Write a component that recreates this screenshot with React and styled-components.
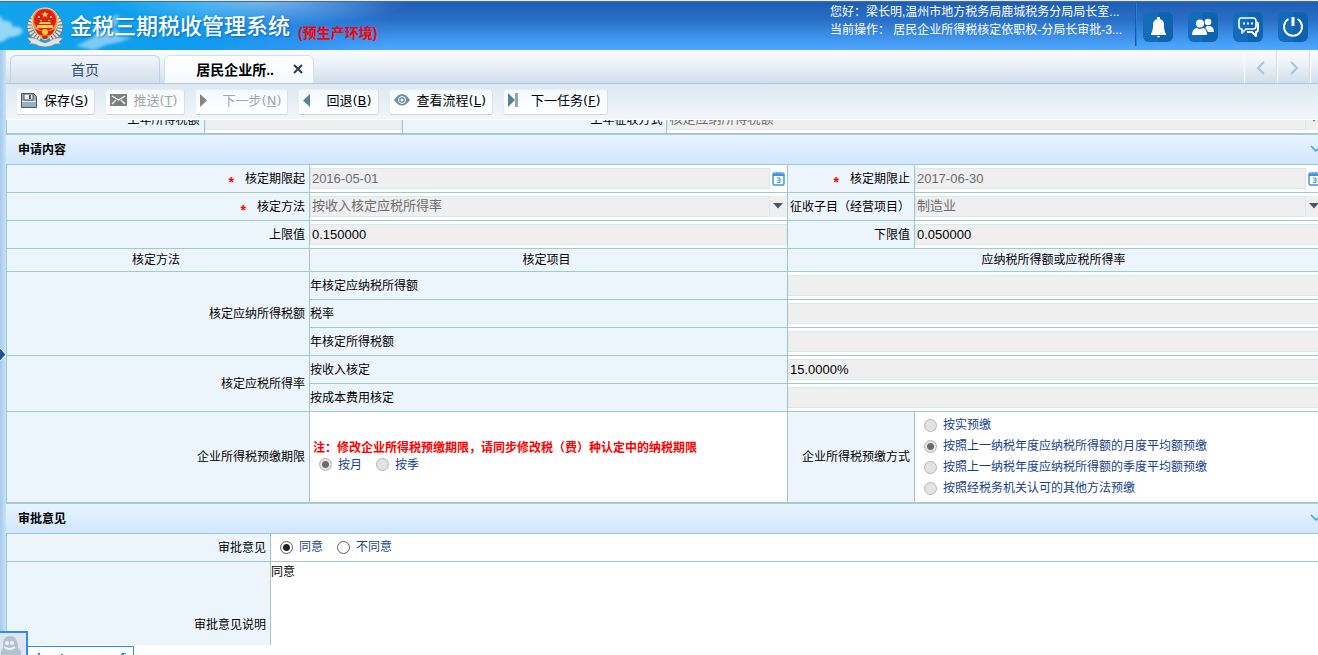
import { useLayoutEffect, useRef } from 'react';
import styled, { createGlobalStyle, css } from 'styled-components';

const GlobalStyle = createGlobalStyle`
	*, *::before, *::after {
		box-sizing: border-box;
	}

	body {
		margin: 0;
		background: #fff;
		color: #000;
		font: 12px/16px 'Liberation Sans', 'Noto Sans CJK SC', sans-serif;
	}

	button, input, select, textarea {
		font-family: inherit;
		margin: 0;
	}
`;

const line = '#a3c8c6';
const blue = '#15428b';

const Page = styled.div`
	display: flex;
	flex-direction: column;
	height: 100vh;
	overflow: hidden;
`;

/* header */

const Header = styled.header`
	position: relative;
	display: flex;
	flex-shrink: 0;
	align-items: center;
	height: 50px;
	padding: 2px 10px 0 26px;
	overflow: hidden;
	border-top: 1px solid #dbe9ee;
	color: #fff;
	background: linear-gradient(#1e5cb4, #2a70c8 40%, #4aa3fa 92%, #4ca8fd);

	&::before {
		content: '';
		position: absolute;
		inset: 0;
		background:
			radial-gradient(ellipse 150px 26px at 260px 0, rgb(255 255 255 / 40%), transparent),
			linear-gradient(90deg, #12a3ea, #0f9cf0 200px, rgb(30 140 240 / 60%) 300px, transparent 390px);
	}

	&::after {
		content: '';
		position: absolute;
		inset: 0 0 auto;
		height: 1px;
		background: #52707c;
	}
`;

const Clouds = styled.svg`
	position: absolute;
	left: 0;
	bottom: 0;
	width: 150px;
	height: 48px;
`;

const Emblem = styled.svg`
	position: relative;
	width: 38px;
	height: 40px;
	margin-right: 6px;
`;

const SystemTitle = styled.h1`
	position: relative;
	margin: 0;
	font-size: 22px;
	line-height: 32px;
	font-weight: 500;
	text-shadow: 1px 1px 2px rgb(0 60 120 / 50%);
`;

const Environment = styled.strong`
	position: relative;
	margin: 12px 0 0 8px;
	color: #f00;
	font-size: 14px;
	line-height: 20px;
`;

const UserInfo = styled.div`
	position: relative;
	align-self: flex-start;
	width: 307px;
	height: 43px;
	margin-left: auto;
	border-right: 1px solid #1c87d6;
	box-shadow: inset -1px 0 #1a58a8;
	line-height: 18px;
	white-space: nowrap;
`;

const HeaderActions = styled.nav`
	position: relative;
	display: flex;
	gap: 15px;
	margin-left: 6px;
`;

const HeaderButton = styled.button`
	width: 30px;
	height: 30px;
	padding: 0;
	border: 0;
	border-radius: 6px;
	background: linear-gradient(90deg, #126bbb 50%, #0f62ae 50%);

	svg {
		display: block;
		width: 30px;
		height: 30px;
	}
`;

/* frame */

const Frame = styled.div`
	display: flex;
	flex: 1;
	min-height: 0;
	margin-bottom: 10px;
`;

const Rail = styled.aside`
	position: relative;
	flex: 0 0 6px;
	background: linear-gradient(90deg, #a5c9ee, #c9e2f8);
`;

const RailHandle = styled.button`
	position: absolute;
	left: 0;
	top: 50%;
	width: 6px;
	height: 14px;
	padding: 0;
	border: 0;
	background: #f4faff;
	clip-path: polygon(0 0, 100% 40%, 100% 60%, 0 100%);

	&::before {
		content: '';
		position: absolute;
		inset: 1px 1px 1px 0;
		background: #1a5594;
		clip-path: polygon(0 0, 100% 45%, 100% 55%, 0 100%);
	}
`;

const Main = styled.main`
	display: flex;
	flex: 1;
	flex-direction: column;
	min-width: 0;
`;

const TabStrip = styled.div`
	display: flex;
	flex-shrink: 0;
	align-items: flex-end;
	gap: 4px;
	height: 34px;
	padding-left: 4px;
	border-bottom: 1px solid #aecbe6;
	background: linear-gradient(#f8fcff, #e9f0f6 50%, #cfdeeb);
`;

const Tab = styled.button`
	display: flex;
	align-items: center;
	justify-content: center;
	width: 150px;
	height: 28px;
	padding: 0 8px;
	border: 1px solid #c0d2e4;
	border-bottom: 0;
	border-radius: 6px 6px 0 0;
	color: #2b4a7d;
	font-size: 14px;
	line-height: 20px;
	background: linear-gradient(#f0f5fa, #d3e0ec);

	${({ $active }) =>
		$active &&
		css`
			justify-content: flex-end;
			gap: 18px;
			border-color: #cfe2f5;
			color: #000;
			font-weight: bold;
			background: linear-gradient(#fff, #f6fafd);
		`}
`;

const TabArrows = styled.div`
	display: flex;
	align-self: stretch;
	margin: 0 7px 0 auto;
	border-right: 1px solid #fff;
`;

const TabArrow = styled.button`
	display: flex;
	align-items: center;
	justify-content: center;
	width: 33px;
	padding: 3px 0 0;
	border: 0;
	border-left: 1px solid #fff;
	box-shadow: inset -1px 0 #d1dde9;
	background: none;
`;

const Toolbar = styled.div`
	display: flex;
	flex-shrink: 0;
	align-items: center;
	gap: 10px;
	height: 36px;
	padding: 0 10px;
	border-bottom: 1px solid #fff;
	background: linear-gradient(#dde8f1, #f1f6fa);
`;

const ToolButton = styled.button`
	display: flex;
	align-items: center;
	gap: 6px;
	height: 26px;
	padding: 0 6px 1px 4px;
	border: 1px solid #e6edf3;
	border-right-color: #dadfe3;
	border-bottom-color: #cfd3d6;
	border-radius: 3px;
	color: #000;
	font: 13px/20px 'DejaVu Sans', 'Noto Sans CJK SC', sans-serif;
	white-space: nowrap;
	background: linear-gradient(#f3fafe, #fff);

	&:disabled {
		color: #a3a5a8;
	}

	svg {
		width: 17px;
		height: 18px;
	}
`;

/* form */

const Scroller = styled.div`
	flex: 1;
	min-height: 0;
	overflow: hidden;
`;

const Content = styled.div`
	width: calc(100% + 6px);
`;

const SectionHead = styled.h2`
	display: flex;
	align-items: center;
	justify-content: space-between;
	height: 30px;
	margin: 0;
	padding: 0 2px 0 12px;
	border-top: 1px solid #a8cbe2;
	font-size: 12px;
	background: linear-gradient(#e7f4ff, #d1e6fd);
`;

const FormTable = styled.table`
	width: 100%;
	table-layout: fixed;
	border-spacing: 0;
	border-left: 1px solid ${line};
	border-top: ${({ $open }) => ($open ? '0' : '1px solid #9cc8de')};
`;

const Row = styled.tr`
	height: ${({ $height }) => $height || 28}px;
`;

const cell = css`
	padding: 0;
	border-right: 1px solid ${line};
	border-bottom: 1px solid ${line};
`;

const LabelCell = styled.th`
	${cell}
	padding-right: 4px;
	background: #edf5fc;
	font-weight: normal;
	text-align: right;
	white-space: nowrap;
`;

const HeadCell = styled(LabelCell)`
	text-align: center;
`;

const ItemCell = styled(LabelCell)`
	padding: 0;
	text-align: left;
`;

const ValueCell = styled.td`
	${cell}
	background: #fff;
`;

const Required = styled.span`
	margin-right: 11px;
	color: #f00;
	font: bold 14px/8px 'Liberation Sans', sans-serif;
	vertical-align: -4px;
`;

const Field = styled.div`
	display: flex;
	align-items: center;
	height: 21px;
`;

const fieldBox = css`
	flex: 1;
	min-width: 0;
	height: 21px;
	padding: 0 1px;
	border: 1px solid #d9e8ef;
	border-radius: 0;
	background: #efefef;
	font-size: 13px;
	opacity: 1;
`;

const Input = styled.input`
	${fieldBox}
	color: ${({ $muted }) => ($muted ? '#6d6d6d' : '#000')};
`;

const Select = styled.select`
	${fieldBox}
	padding-bottom: 2px;
	appearance: none;
	color: #6d6d6d;
`;

const FieldButton = styled.button`
	flex: 0 0 17px;
	height: 21px;
	padding: ${({ $filled }) => ($filled ? '0 0 3px' : '0')};
	border: 0;
	background: ${({ $filled }) => ($filled ? '#efefef' : 'none')};

	svg {
		display: block;
		margin: 0 auto;
	}
`;

const Note = styled.p`
	margin: 0;
	padding-left: 3px;
	color: #f00;
	font-weight: bold;
	line-height: 16px;
`;

const RadioGroup = styled.div`
	display: flex;
	flex-direction: ${({ $stacked }) => ($stacked ? 'column' : 'row')};
	gap: ${({ $stacked }) => ($stacked ? 3 : 14)}px;
	padding: 0 0 1px 9px;
`;

const RadioLabel = styled.label`
	display: flex;
	align-items: center;
	gap: 6px;
	color: ${blue};
	line-height: 18px;
`;

const RadioInput = styled.input`
	appearance: none;
	width: 13px;
	height: 13px;
	border: 1px solid #5e5e5e;
	border-radius: 50%;
	background: #fff;

	&:checked {
		background: radial-gradient(circle, #222 3px, #fff 4px);
	}

	&:disabled {
		border-color: #b4b4b4;
		background: #e3e3e3;
	}

	&:disabled:checked {
		background: radial-gradient(circle, #6b6b6b 3px, #e3e3e3 4px);
	}
`;

const Opinion = styled.textarea`
	display: block;
	width: 100%;
	height: 125px;
	padding: 2px 0;
	border: 0;
	resize: none;
	color: #000;
	font-size: 12px;
	line-height: 16px;
`;

/* chat window docked over the page */

const ChatDock = styled.div`
	position: fixed;
	left: 0;
	bottom: 0;
	display: flex;
	align-items: flex-end;
`;

const ChatAvatar = styled.div`
	width: 28px;
	height: 24px;
	border: 2px solid #2a8df5;
	border-width: 2px 2px 0 0;
	background: #dfe6f0;

	svg {
		display: block;
	}
`;

const ChatBar = styled.div`
	width: 106px;
	height: 9px;
	border: 1px solid #2a8df5;
	border-width: 1px 1px 0 0;
	background: #fff;

	svg {
		display: block;
	}
`;

const EmblemIcon = () => (
	<Emblem viewBox='0 0 38 40' aria-hidden='true'>
		<path d='M8 10C2 17 2 27 14 32M30 10c6 7 6 17-6 22' fill='none' stroke='#777b7c' strokeWidth='6' />
		<path d='M8 10C2 17 2 27 14 32M30 10c6 7 6 17-6 22' fill='none' stroke='#dfe3e2' strokeWidth='5' strokeDasharray='2 1.2' />
		<path d='M1 31q8-1 13 3l5 2 5-2q5-4 13-3l-4 4 2 2q-6-1-10 2l-6 1-6-1q-4-3-10-2l2-2z' fill='#e2e4e4' stroke='#8b8b8b' strokeWidth='.7' />
		<path d='M19 1c8 0 13 5 13 12 0 9-6 17-13 20C12 30 6 22 6 13 6 6 11 1 19 1z' fill='#e8963a' stroke='#f4dda3' />
		<circle cx='19' cy='13' r='11' fill='#e31e18' />
		<path d='m19 4 1 2.5h2.6l-2 1.6.7 2.5-2.3-1.5-2.3 1.5.7-2.5-2-1.6H18z' fill='#ffe14d' />
		<path d='M12 9h2v2h-2zM24 9h2v2h-2zM14 13h2v1h-2zM22 13h2v1h-2zM14 15h10l1 2H13zM11 18h16v3H11z' fill='#ffd84a' />
		<path d='M9 22q10 5 20 0l-3 5q-7 3-14 0z' fill='#d81c16' />
		<circle cx='19' cy='25' r='3' fill='#f7ca3d' />
		<path d='M16 29h6l-1 3h-4z' fill='#cf2418' />
	</Emblem>
);

const BellIcon = () => (
	<svg viewBox='0 0 30 30' fill='#fff' aria-hidden='true'>
		<path d='M14 5h3v2c3 1 4 3 4 6 0 5 1 7 2 9H8c1-2 2-4 2-9 0-3 1-5 4-6zM8 22h15v1H8z' />
		<path d='M14 24h3q-1.500 3-3 0z' />
	</svg>
);

const UsersIcon = () => (
	<svg viewBox='0 0 30 30' fill='#fff' aria-hidden='true'>
		<circle cx='20' cy='10' r='3.300' />
		<path d='M19 14h3q4 1 4 6h-6q-1-3-3-4z' />
		<circle cx='12' cy='11.500' r='4' />
		<path d='M9 16q3 2 6 0 4 1 4 7H4q0-6 5-7z' />
	</svg>
);

const ChatIcon = () => (
	<svg viewBox='0 0 30 30' fill='none' stroke='#fff' strokeWidth='1.600' strokeLinejoin='round' aria-hidden='true'>
		<path d='M8 6h12q3 0 3 3v5q0 3-3 3h-7l-4 4v-4H8q-2-.5-2-3V9q0-3 2-3z' />
		<path d='M24 10q1 1 1 3v4q0 3-2 3v4l-4-4h-5' strokeWidth='2' />
		<path d='M10 11.500h2M14 11.500h2M18 11.500h2' strokeWidth='2' />
	</svg>
);

const PowerIcon = () => (
	<svg viewBox='0 0 30 30' fill='none' stroke='#fff' strokeWidth='2' aria-hidden='true'>
		<path d='M10.500 7a9 9 0 1 0 9 0' />
		<path d='M15 5v9' strokeWidth='3' />
	</svg>
);

const SaveIcon = () => (
	<svg viewBox='0 0 17 18' aria-hidden='true'>
		<path d='M.5 1.500h12l3 3v11H.5z' fill='#9aafbb' stroke='#465866' />
		<path d='M3 2h9v6H3z' fill='#eef4f7' stroke='#465866' />
		<path d='M8 3h2v4H8z' fill='#465866' />
		<path d='M1 9h14v1H1z' fill='#e4ecf0' />
	</svg>
);

const SendIcon = () => (
	<svg viewBox='0 0 17 18' aria-hidden='true'>
		<path d='M0 2h17v12H0z' fill='#7f7f7f' />
		<path d='m2 4 6.500 4L15 4M2 12l4-4m9 4-4-4' fill='none' stroke='#fff' strokeWidth='1.300' />
	</svg>
);

const NextIcon = () => (
	<svg viewBox='0 0 17 18' aria-hidden='true'>
		<path d='M0 2v13l7-6.500z' fill='#858585' />
	</svg>
);

const BackIcon = () => (
	<svg viewBox='0 0 17 18' aria-hidden='true'>
		<path d='M7 2v13L0 8.500z' fill='#5c8299' />
	</svg>
);

const EyeIcon = () => (
	<svg viewBox='0 0 17 18' aria-hidden='true'>
		<path d='M0 8q8-12 16 0-8 11-16 0z' fill='#6d8da1' />
		<circle cx='8' cy='8' r='3.500' fill='none' stroke='#fff' />
		<circle cx='8' cy='8' r='1.500' fill='#fff' />
	</svg>
);

const SkipIcon = () => (
	<svg viewBox='0 0 17 18' aria-hidden='true'>
		<path d='M0 1v14l7-7z' fill='#5c7f95' />
		<path d='M7 1h3v14H7z' fill='#91a7b5' />
	</svg>
);

const CalendarIcon = () => (
	<svg width='13' height='15' viewBox='0 0 13 15' aria-hidden='true'>
		<rect x='1' y='2' width='11' height='12' rx='1.500' fill='#fff' stroke='#3f94dc' strokeWidth='1.500' />
		<path d='M1 2h11v3H1z' fill='#3f94dc' />
		<path d='M2 1h1v2M5 1h1v2M8 1h1v2M11 1v2' stroke='#9fcdf2' fill='none' />
		<path d='M5 7h3v4.500H5M5.500 9.200H8' fill='none' stroke='#3f94dc' />
	</svg>
);

const Caret = () => (
	<svg width='11' height='7' viewBox='0 0 11 7' aria-hidden='true'>
		<path d='M0 1h10L5 6.500z' fill='#4d5566' />
	</svg>
);

const Chevron = ({ points, size = 14, color = '#a5c3df', width = 2 }) => (
	<svg width={size} height={size} viewBox='0 0 14 14' fill='none' stroke={color} strokeWidth={width} aria-hidden='true'>
		<polyline points={points} />
	</svg>
);

const tools = [
	{ text: '保存', hotkey: 'S', Icon: SaveIcon },
	{ text: '推送', hotkey: 'T', Icon: SendIcon, disabled: true },
	{ text: '下一步', hotkey: 'N', Icon: NextIcon, disabled: true },
	{ text: '回退', hotkey: 'B', Icon: BackIcon },
	{ text: '查看流程', hotkey: 'L', Icon: EyeIcon },
	{ text: '下一任务', hotkey: 'F', Icon: SkipIcon },
];

const headerActions = [
	{ label: '消息提醒', Icon: BellIcon },
	{ label: '用户', Icon: UsersIcon },
	{ label: '在线交流', Icon: ChatIcon },
	{ label: '退出', Icon: PowerIcon },
];

const assessed = [
	{
		method: '核定应纳所得税额',
		items: [
			{ name: '年核定应纳税所得额', value: '' },
			{ name: '税率', value: '' },
			{ name: '年核定所得税额', value: '' },
		],
	},
	{
		method: '核定应税所得率',
		items: [
			{ name: '按收入核定', value: '15.0000%' },
			{ name: '按成本费用核定', value: '' },
		],
	},
];

const prepayModes = [
	'按实预缴',
	'按照上一纳税年度应纳税所得额的月度平均额预缴',
	'按照上一纳税年度应纳税所得额的季度平均额预缴',
	'按照经税务机关认可的其他方法预缴',
];

const FieldLabel = ({ id, required, children }) => (
	<LabelCell scope='row'>
		{required && <Required>*</Required>}
		<label htmlFor={id}>{children}</label>
	</LabelCell>
);

const TextField = ({ id, value, label }) => (
	<Field>
		<Input id={id} value={value} aria-label={label} readOnly />
	</Field>
);

const DateField = ({ id, value }) => (
	<Field>
		<Input id={id} value={value} $muted readOnly />
		<FieldButton type='button' aria-label='选择日期' disabled>
			<CalendarIcon />
		</FieldButton>
	</Field>
);

const SelectField = ({ id, value }) => (
	<Field>
		<Select id={id} disabled>
			<option>{value}</option>
		</Select>
		<FieldButton type='button' aria-label='展开' $filled disabled>
			<Caret />
		</FieldButton>
	</Field>
);

const Radios = ({ name, options, selected, stacked, disabled }) => (
	<RadioGroup $stacked={stacked} role='radiogroup'>
		{options.map((option) => (
			<RadioLabel key={option}>
				<RadioInput type='radio' name={name} defaultChecked={option === selected} disabled={disabled} />
				{option}
			</RadioLabel>
		))}
	</RadioGroup>
);

const Section = ({ title, children }) => (
	<section>
		<SectionHead>
			{title}
			<Chevron points='3,3 8,8 13,3' color='#3f9be0' width={1.5} />
		</SectionHead>
		{children}
	</section>
);

export default function App() {
	const scroller = useRef(null);

	useLayoutEffect(() => {
		scroller.current.scrollTop = 14;
	}, []);

	return (
		<Page>
			<GlobalStyle />
			<Header>
				<Clouds viewBox='0 0 150 48' aria-hidden='true'>
					<defs>
						<filter id='soft' x='-50%' width='200%'>
							<feGaussianBlur stdDeviation='1.6' />
						</filter>
					</defs>
					<g fill='#fff' filter='url(#soft)'>
						<path d='M-6 16q8-4 9 3 8-2 10 6 8-2 10 5-6 6-14 5-8 8-15 4z' opacity='.55' />
						<path d='M76 44l16-8 8-7 10 3 6-6 4 8 12 1-12 5-14 3-12 5z' opacity='.45' />
						<path d='M104 24l8-9 6-3 1 6-5 8z' opacity='.4' />
					</g>
				</Clouds>
				<EmblemIcon />
				<SystemTitle>金税三期税收管理系统</SystemTitle>
				<Environment>(预生产环境)</Environment>
				<UserInfo>
					<div>您好：梁长明,温州市地方税务局鹿城税务分局局长室...</div>
					<div>当前操作： 居民企业所得税核定依职权-分局长审批-3...</div>
				</UserInfo>
				<HeaderActions>
					{headerActions.map(({ label, Icon }) => (
						<HeaderButton key={label} type='button' aria-label={label}>
							<Icon />
						</HeaderButton>
					))}
				</HeaderActions>
			</Header>

			<Frame>
				<Rail>
					<RailHandle type='button' aria-label='展开菜单' />
				</Rail>
				<Main>
					<TabStrip>
						<Tab type='button'>首页</Tab>
						<Tab type='button' $active>
							居民企业所..
							<svg width='13' height='12' viewBox='0 0 13 12' fill='none' stroke='#2b3d5c' strokeWidth='2' aria-hidden='true'>
								<path d='m2 1 8 8M10 1 2 9' />
							</svg>
						</Tab>
						<TabArrows>
							<TabArrow type='button' aria-label='向左'>
								<Chevron points='10,1 4,7 10,13' />
							</TabArrow>
							<TabArrow type='button' aria-label='向右'>
								<Chevron points='4,1 10,7 4,13' />
							</TabArrow>
						</TabArrows>
					</TabStrip>

					<Toolbar>
						{tools.map(({ text, hotkey, Icon, disabled }) => (
							<ToolButton key={hotkey} type='button' disabled={disabled}>
								<Icon />
								<span>
									{text}(<u>{hotkey}</u>)
								</span>
							</ToolButton>
						))}
					</Toolbar>

					<Scroller ref={scroller}>
						<Content>
							<FormTable $open>
								<colgroup>
									<col width='15%' />
									<col width='15.1%' />
									<col width='20.05%' />
									<col />
								</colgroup>
								<tbody>
									<Row>
										<FieldLabel id='lastTax'>上年所得税额</FieldLabel>
										<ValueCell>
											<TextField id='lastTax' value='' />
										</ValueCell>
										<FieldLabel id='lastMode'>上年征收方式</FieldLabel>
										<ValueCell>
											<SelectField id='lastMode' value='核定应纳所得税额' />
										</ValueCell>
									</Row>
								</tbody>
							</FormTable>

							<Section title='申请内容'>
								<FormTable>
									<colgroup>
										<col width='23%' />
										<col width='36.3%' />
										<col width='9.64%' />
										<col />
									</colgroup>
									<tbody>
										<Row>
											<FieldLabel id='from' required>核定期限起</FieldLabel>
											<ValueCell>
												<DateField id='from' value='2016-05-01' />
											</ValueCell>
											<FieldLabel id='to' required>核定期限止</FieldLabel>
											<ValueCell>
												<DateField id='to' value='2017-06-30' />
											</ValueCell>
										</Row>
										<Row>
											<FieldLabel id='method' required>核定方法</FieldLabel>
											<ValueCell>
												<SelectField id='method' value='按收入核定应税所得率' />
											</ValueCell>
											<FieldLabel id='item'>征收子目（经营项目）</FieldLabel>
											<ValueCell>
												<SelectField id='item' value='制造业' />
											</ValueCell>
										</Row>
										<Row>
											<FieldLabel id='upper'>上限值</FieldLabel>
											<ValueCell>
												<TextField id='upper' value='0.150000' />
											</ValueCell>
											<FieldLabel id='lower'>下限值</FieldLabel>
											<ValueCell>
												<TextField id='lower' value='0.050000' />
											</ValueCell>
										</Row>
										<Row $height={23}>
											<HeadCell scope='col'>核定方法</HeadCell>
											<HeadCell scope='col'>核定项目</HeadCell>
											<HeadCell scope='col' colSpan={2}>应纳税所得额或应税所得率</HeadCell>
										</Row>
										{assessed.map(({ method, items }) =>
											items.map(({ name, value }, index) => (
												<Row key={name}>
													{index === 0 && (
														<LabelCell scope='rowgroup' rowSpan={items.length}>
															{method}
														</LabelCell>
													)}
													<ItemCell scope='row'>{name}</ItemCell>
													<ValueCell colSpan={2}>
														<TextField label={name} value={value} />
													</ValueCell>
												</Row>
											))
										)}
										<Row $height={91}>
											<LabelCell scope='row'>企业所得税预缴期限</LabelCell>
											<ValueCell>
												<Note>注：修改企业所得税预缴期限，请同步修改税（费）种认定中的纳税期限</Note>
												<Radios name='period' options={['按月', '按季']} selected='按月' disabled />
											</ValueCell>
											<LabelCell scope='row'>企业所得税预缴方式</LabelCell>
											<ValueCell>
												<Radios name='mode' options={prepayModes} selected={prepayModes[1]} stacked disabled />
											</ValueCell>
										</Row>
									</tbody>
								</FormTable>
							</Section>

							<Section title='审批意见'>
								<FormTable>
									<colgroup>
										<col width='20.05%' />
										<col />
									</colgroup>
									<tbody>
										<Row>
											<LabelCell scope='row'>审批意见</LabelCell>
											<ValueCell>
												<Radios name='approval' options={['同意', '不同意']} selected='同意' />
											</ValueCell>
										</Row>
										<Row>
											<FieldLabel id='opinion'>审批意见说明</FieldLabel>
											<ValueCell>
												<Opinion id='opinion' defaultValue='同意' />
											</ValueCell>
										</Row>
									</tbody>
								</FormTable>
							</Section>
						</Content>
					</Scroller>
				</Main>
			</Frame>

			<ChatDock>
				<ChatAvatar>
					<svg width='26' height='22' viewBox='0 0 26 22' aria-hidden='true'>
						<path d='M1 22q-1-4 2-7Q2 3 10 3t8 12q4 3 3 7z' fill='#b4c1d1' />
						<circle cx='7' cy='10' r='2' fill='#eef2f7' />
						<circle cx='12' cy='10' r='2' fill='#eef2f7' />
						<path d='M4 14q6 4 11 0' fill='none' stroke='#eef2f7' strokeWidth='2' />
					</svg>
				</ChatAvatar>
				<ChatBar>
					<svg width='104' height='8' viewBox='0 0 104 8' fill='#2a8df5' aria-hidden='true'>
						<path d='M10 6h2v2h-2zM33 7h2v1h-2zM94 6h4v1h-2v1h-3z' />
					</svg>
				</ChatBar>
			</ChatDock>
		</Page>
	);
}
